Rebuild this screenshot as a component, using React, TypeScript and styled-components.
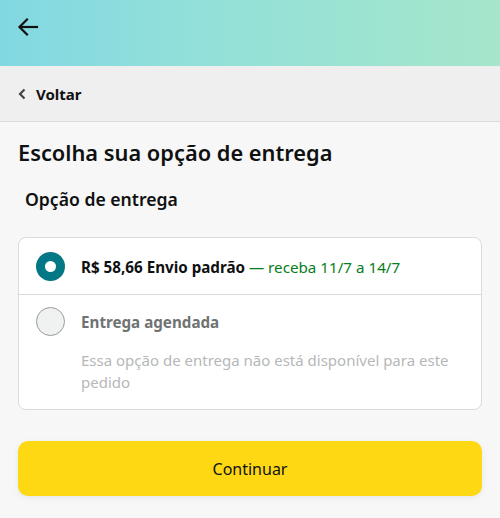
import React from "react";
import styled, { createGlobalStyle } from "styled-components";

const Global = createGlobalStyle`
  html, body { margin: 0; padding: 0; background: #f7f7f7; }
  body { font-family: "Noto Sans", "Open Sans", sans-serif; color: #0f1111; }
  * { box-sizing: border-box; }
`;

const Page = styled.div`
  width: 500px;
  min-height: 518px;
  background: #f7f7f7;
  display: flex;
  flex-direction: column;
`;

const Header = styled.header`
  height: 66px;
  background: linear-gradient(90deg, #82d8e2 0%, #92e0d9 40%, #a5e6cb 100%);
  display: flex;
  align-items: center;
  padding-left: 16px;
`;

const IconButton = styled.button`
  border: 0;
  background: none;
  padding: 0;
  width: 24px;
  height: 24px;
  display: flex;
  align-items: center;
  justify-content: center;
  margin-top: -12px;
`;

const BackBar = styled.div`
  height: 56px;
  background: #efefef;
  border-bottom: 1px solid #dcdcdc;
  display: flex;
  align-items: center;
  padding-left: 18px;
  gap: 10px;
  font-size: 15px;
  font-weight: 700;
  color: #111;
`;

const Content = styled.main`
  padding: 0 18px;
  display: flex;
  flex-direction: column;
`;

const Title = styled.h1`
  margin: 17px 0 0;
  font-size: 21.8px;
  font-weight: 600;
  line-height: 28px;
  color: #0f1111;
`;

const Subtitle = styled.h2`
  margin: 20px 0 0 7px;
  font-size: 17.6px;
  font-weight: 600;
  line-height: 24px;
  color: #0f1111;
`;

const Card = styled.div`
  margin-top: 26px;
  background: #fff;
  border: 1px solid #d9dcdc;
  border-radius: 8px;
  overflow: hidden;
`;

const OptionRow = styled.div<{ $divider?: boolean }>`
  display: grid;
  grid-template-columns: 30px 1fr;
  column-gap: 15px;
  align-items: center;
  padding: ${(p) => (p.$divider ? "12px 16px 16px 17px" : "14px 16px 13px 17px")};
  border-top: ${(p) => (p.$divider ? "1px solid #dadada" : "none")};
`;

const Radio = styled.span<{ $checked?: boolean }>`
  width: 29px;
  height: 29px;
  border-radius: 50%;
  display: flex;
  align-items: center;
  justify-content: center;
  background: ${(p) => (p.$checked ? "#027785" : "#f0f2f2")};
  border: ${(p) => (p.$checked ? "none" : "1px solid #9a9a9a")};
  &::after {
    content: "";
    display: ${(p) => (p.$checked ? "block" : "none")};
    width: 11px;
    height: 11px;
    border-radius: 50%;
    background: #fff;
  }
`;

const Label = styled.span<{ $disabled?: boolean }>`
  font-size: 15.2px;
  font-weight: 700;
  line-height: 22px;
  color: ${(p) => (p.$disabled ? "#6f7373" : "#0f1111")};
`;

const Green = styled.span`
  font-weight: 400;
  color: #067d1b;
`;

const Note = styled.p`
  grid-column: 2;
  margin: 13px 0 0;
  font-size: 15px;
  line-height: 22px;
  color: #b5b8b8;
`;

const PrimaryButton = styled.button`
  margin-top: 31px;
  height: 55px;
  border: 0;
  border-radius: 10px;
  background: #ffd814;
  box-shadow: 0 2px 5px rgba(213, 217, 217, 0.5);
  font-family: inherit;
  font-size: 16px;
  color: #0f1111;
`;

export default function App() {
  return (
    <Page>
      <Global />
      <Header>
        <IconButton aria-label="Voltar">
          <svg width="22" height="20" viewBox="0 0 22 20" fill="none" stroke="#111" strokeWidth="2.2" strokeLinecap="square">
            <path d="M20 10H3" />
            <path d="M10 2.5L2.5 10L10 17.5" strokeLinejoin="miter" />
          </svg>
        </IconButton>
      </Header>
      <BackBar>
        <svg width="8" height="12" viewBox="0 0 8 12" fill="none" stroke="#444" strokeWidth="2.2">
          <path d="M6.5 1.5L2 6l4.5 4.5" />
        </svg>
        Voltar
      </BackBar>
      <Content>
        <Title>Escolha sua opção de entrega</Title>
        <Subtitle>Opção de entrega</Subtitle>
        <Card>
          <OptionRow>
            <Radio $checked />
            <Label>
              R$ 58,66 Envio padrão <Green>— receba 11/7 a 14/7</Green>
            </Label>
          </OptionRow>
          <OptionRow $divider>
            <Radio />
            <Label $disabled>Entrega agendada</Label>
            <Note>Essa opção de entrega não está disponível para este pedido</Note>
          </OptionRow>
        </Card>
        <PrimaryButton>Continuar</PrimaryButton>
      </Content>
    </Page>
  );
}
